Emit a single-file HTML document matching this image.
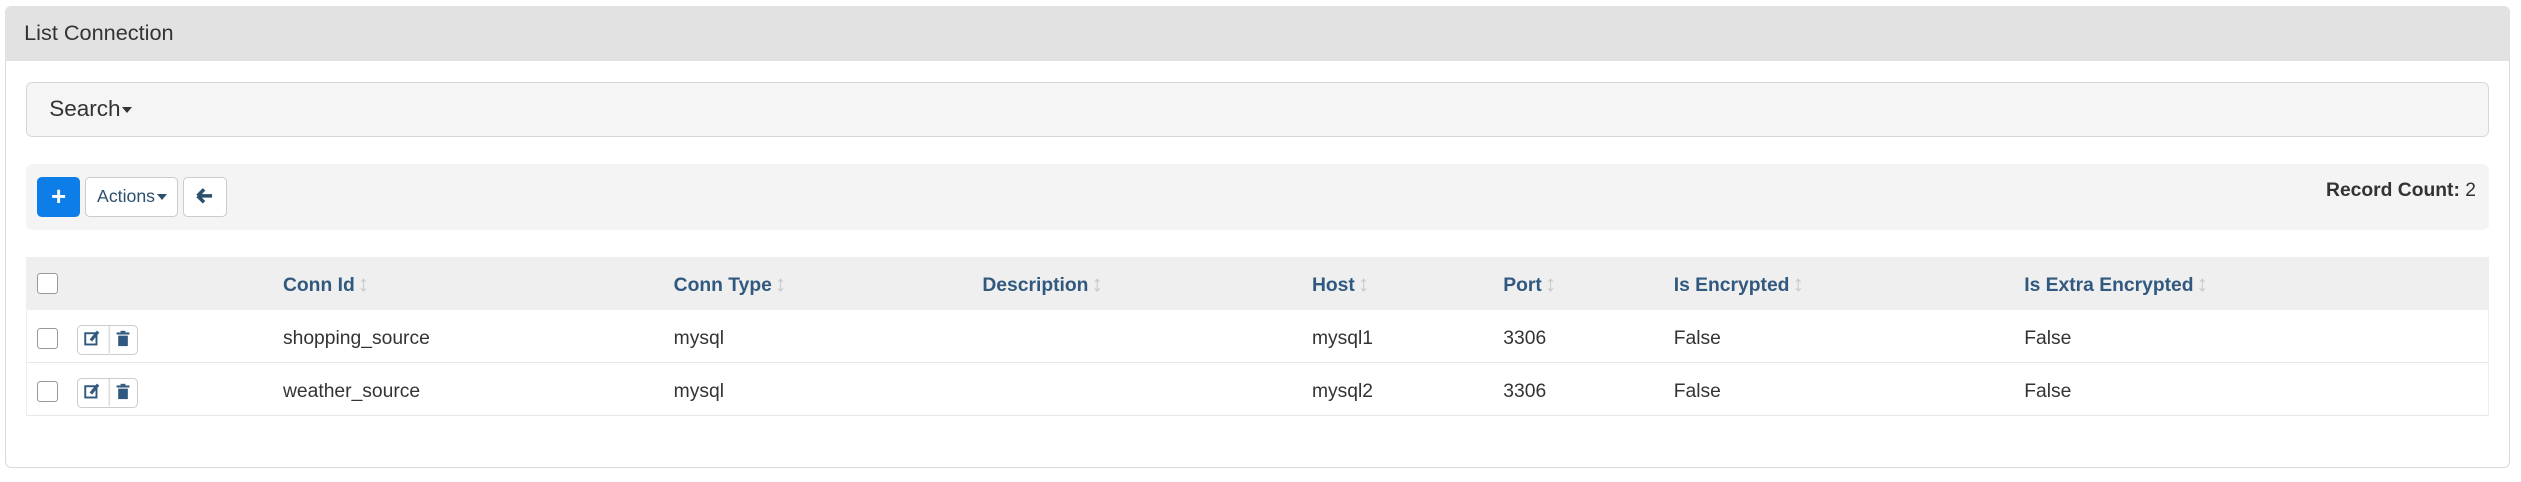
<!DOCTYPE html>
<html><head><style>
html,body{margin:0;padding:0;background:#fff;width:2521px;height:482px;overflow:hidden}
#z{zoom:1.6078;width:1568px;height:300px;position:relative;font-family:"Liberation Sans",Arial,sans-serif;color:#333}
.a{position:absolute;box-sizing:border-box}
.panel{left:3px;top:4px;width:1558px;height:287px;border:1px solid #d8d8d8;border-radius:4px}
.hd{left:3px;top:4px;width:1558px;height:34px;background:#e2e2e2;border-radius:4px 4px 0 0;font-size:13.5px;line-height:34px;padding-left:12px;color:#333}
.search{left:16px;top:51px;width:1532px;height:34px;background:#f5f5f5;border:1px solid #d6d6d6;border-radius:4px;font-size:14px;line-height:32px;padding-left:14px}
.caret{display:inline-block;width:0;height:0;border-left:3.5px solid transparent;border-right:3.5px solid transparent;border-top:4px solid #333;vertical-align:middle;margin-left:1px}
.tb{left:16px;top:102px;width:1532px;height:41px;background:#f4f4f4;border-radius:4px}
.btn{top:110px;height:25px;border:1px solid #ccc;border-radius:3px;background:#fff;font-size:11px;line-height:23px;text-align:center;color:#2c4f6e}
.thd{left:16px;top:160px;width:1532px;height:33px;background:#efefef}
.row{left:16px;width:1532px;height:33px;border-bottom:1px solid #e8e8e8;border-left:1px solid #eee;border-right:1px solid #eee}
.th{font-size:12px;font-weight:bold;color:#31597f;top:170px;white-space:nowrap;line-height:14px}
.th span{color:#c8c8c8;font-weight:normal;margin-left:2px;font-size:14px;line-height:14px}
.td{font-size:12px;color:#333;white-space:nowrap}
.cb{width:13px;height:13px;border:1px solid #999;border-radius:2px;background:#fff}
.ib{width:38px;height:19px;border:1px solid #ccc;border-radius:3px;background:#fff}
</style></head><body><div id="z">
<div class="a panel"></div>
<div class="a hd">List Connection</div>
<div class="a search">Search<span class="caret"></span></div>
<div class="a tb"></div>
<div class="a btn" style="left:23px;width:27px;background:#0d7de8;border-color:#0d7de8;color:#fff;font-size:16px;font-weight:bold;line-height:24px">+</div>
<div class="a btn" style="left:53px;width:58px">Actions<span class="caret" style="border-top-color:#2c4f6e"></span></div>
<div class="a btn" style="left:114px;width:27px"><svg width="11" height="11" viewBox="0 0 11 11" style="margin-top:6px"><path d="M1 5.5L5 1.5M1 5.5L5 9.5M1 5.5H10" stroke="#2c4f6e" stroke-width="2.2" fill="none"/></svg></div>
<div class="a" style="right:28px;top:112px;font-size:12px;color:#333"><b>Record Count:</b> 2</div>
<div class="a thd"></div>
<div class="a cb" style="left:23px;top:170px"></div>
<div class="a th" style="left:176px">Conn Id<span>↕</span></div>
<div class="a th" style="left:419px">Conn Type<span>↕</span></div>
<div class="a th" style="left:611px">Description<span>↕</span></div>
<div class="a th" style="left:816px">Host<span>↕</span></div>
<div class="a th" style="left:935px">Port<span>↕</span></div>
<div class="a th" style="left:1041px">Is Encrypted<span>↕</span></div>
<div class="a th" style="left:1259px">Is Extra Encrypted<span>↕</span></div>

<div class="a row" style="top:193px"></div>
<div class="a row" style="top:226px"></div>

<div class="a cb" style="left:23px;top:204px"></div>
<div class="a ib" style="left:48px;top:202px"><svg width="38" height="17" viewBox="0 0 38 17"><rect x="4.5" y="4.5" width="7" height="7" fill="none" stroke="#31597f" stroke-width="1.2"/><path d="M8 9L12.5 3.5" stroke="#31597f" stroke-width="2"/><line x1="19.5" y1="0" x2="19.5" y2="17" stroke="#ddd"/><rect x="25" y="6" width="6" height="6.5" fill="#31597f"/><rect x="24" y="4" width="8" height="1.3" fill="#31597f"/><rect x="26.5" y="3" width="3" height="1" fill="#31597f"/></svg></div>
<div class="a td" style="left:176px;top:204px">shopping_source</div>
<div class="a td" style="left:419px;top:204px">mysql</div>
<div class="a td" style="left:816px;top:204px">mysql1</div>
<div class="a td" style="left:935px;top:204px">3306</div>
<div class="a td" style="left:1041px;top:204px">False</div>
<div class="a td" style="left:1259px;top:204px">False</div>

<div class="a cb" style="left:23px;top:237px"></div>
<div class="a ib" style="left:48px;top:235px"><svg width="38" height="17" viewBox="0 0 38 17"><rect x="4.5" y="4.5" width="7" height="7" fill="none" stroke="#31597f" stroke-width="1.2"/><path d="M8 9L12.5 3.5" stroke="#31597f" stroke-width="2"/><line x1="19.5" y1="0" x2="19.5" y2="17" stroke="#ddd"/><rect x="25" y="6" width="6" height="6.5" fill="#31597f"/><rect x="24" y="4" width="8" height="1.3" fill="#31597f"/><rect x="26.5" y="3" width="3" height="1" fill="#31597f"/></svg></div>
<div class="a td" style="left:176px;top:237px">weather_source</div>
<div class="a td" style="left:419px;top:237px">mysql</div>
<div class="a td" style="left:816px;top:237px">mysql2</div>
<div class="a td" style="left:935px;top:237px">3306</div>
<div class="a td" style="left:1041px;top:237px">False</div>
<div class="a td" style="left:1259px;top:237px">False</div>
</div></body></html>
